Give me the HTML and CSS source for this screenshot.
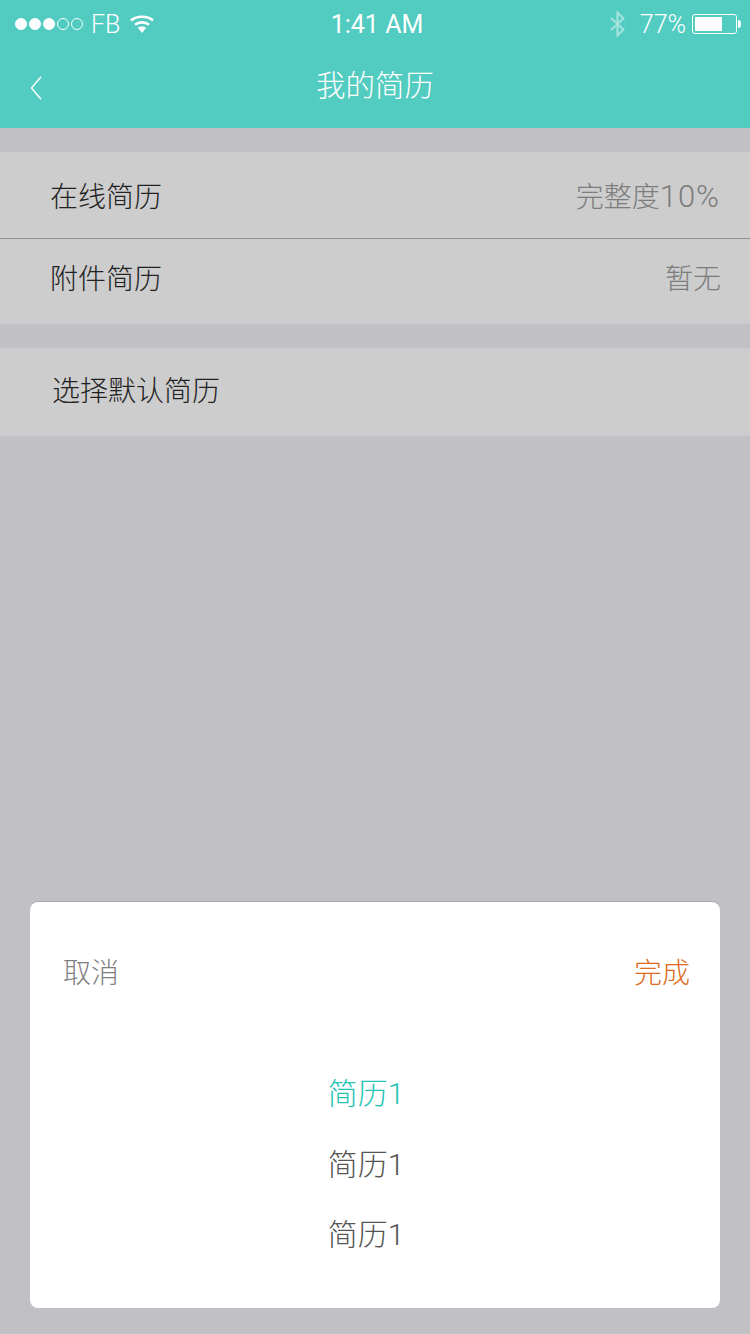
FILE: index.html
```html
<!DOCTYPE html>
<html lang="zh-CN">
<head>
  <meta charset="UTF-8">
  <title>我的简历</title>
  <link rel="stylesheet" href="styles.css">
</head>
<body>
  <header class="top">
    <div class="status">
      <div class="status-left">
        <span class="signal">
          <i class="dot on"></i><i class="dot on"></i><i class="dot on"></i><i class="dot"></i><i class="dot"></i>
        </span>
        <span class="carrier">FB</span>
        <svg class="wifi" width="24" height="18" viewBox="0 0 24 18">
          <path d="M1 5.5C6.5 .5 17.5 .5 23 5.5" fill="none" stroke="#fff" stroke-width="2.6"/>
          <path d="M5 9.8C8.8 6.5 15.2 6.5 19 9.8" fill="none" stroke="#fff" stroke-width="2.6"/>
          <path d="M7.8 12.8C10.2 11 13.8 11 16.2 12.8L12 18Z" fill="#fff"/>
        </svg>
      </div>
      <div class="clock">1:41 AM</div>
      <div class="status-right">
        <svg class="bt" width="15" height="26" viewBox="0 0 15 26">
          <path d="M1 7L13.5 18.5L7.5 24.5V1.5L13.5 7.5L1 19" fill="none" stroke="#a6e3dd" stroke-width="2"/>
        </svg>
        <span class="percent">77%</span>
        <span class="battery"><span class="battery-level"></span></span>
        <span class="battery-tip"></span>
      </div>
    </div>
    <div class="nav">
      <svg class="back" width="12" height="24" viewBox="0 0 12 24">
        <path d="M11 .8L1.5 12L11 23.2" fill="none" stroke="#fff" stroke-width="1.4"/>
      </svg>
      <h1 class="title">我的简历</h1>
    </div>
  </header>

  <main class="content">
    <section class="group">
      <div class="row row-first">
        <span class="row-label">在线简历</span>
        <span class="row-value">完整度<span class="num">10%</span></span>
      </div>
      <div class="row row-second">
        <span class="row-label">附件简历</span>
        <span class="row-value">暂无</span>
      </div>
    </section>
    <section class="group">
      <div class="row row-single">
        <span class="row-label">选择默认简历</span>
      </div>
    </section>

    <div class="dialog">
      <div class="dialog-head">
        <span class="cancel">取消</span>
        <span class="done">完成</span>
      </div>
      <ul class="options">
        <li class="option active">简历1</li>
        <li class="option">简历1</li>
        <li class="option">简历1</li>
      </ul>
    </div>
  </main>
</body>
</html>
```

FILE: styles.css
```css
* {
  box-sizing: border-box;
}
html, body {
  height: 100%;
}
body {
  margin: 0;
  display: flex;
  flex-direction: column;
  height: 1334px;
  overflow: hidden;
  background-color: #c1c0c5;
  font-family: "Roboto", "Noto Sans CJK SC", sans-serif;
  font-weight: 300;
}

/* top bar */
.top {
  height: 128px;
  background-color: #52cbc0;
  color: #fff;
}
.status {
  height: 48px;
  display: grid;
  grid-template-columns: 1fr auto 1fr;
  align-items: center;
  padding: 0 9px 0 15px;
  font-size: 25px;
}
.status-left, .status-right {
  display: flex;
  align-items: center;
}
.status-right {
  justify-content: flex-end;
}
.signal {
  display: flex;
  gap: 2px;
}
.dot {
  width: 12px;
  height: 12px;
  border: 1px solid #fff;
  border-radius: 50%;
}
.dot.on {
  background-color: #fff;
}
.carrier {
  margin-left: 8px;
}
.wifi {
  margin-left: 10px;
}
.clock {
  padding-right: 2px;
  font-weight: 400;
}
.bt {
  margin-right: 15px;
}
.battery {
  width: 45px;
  height: 20px;
  margin-left: 6px;
  padding: 2px;
  border: 1px solid #fff;
  border-radius: 3px;
}
.battery-level {
  display: block;
  width: 27px;
  height: 100%;
  background-color: #fff;
}
.battery-tip {
  width: 3px;
  height: 8px;
  margin-left: 1px;
  background-color: #fff;
  border-radius: 0 3px 3px 0;
}
.nav {
  height: 80px;
  position: relative;
  display: flex;
  align-items: center;
  justify-content: center;
  padding-bottom: 11px;
}
.back {
  position: absolute;
  left: 30px;
  top: 28px;
}
.title {
  margin: 0;
  font-size: 29.5px;
  font-weight: 300;
}

/* rows */
.content {
  flex: 1;
  display: flex;
  flex-direction: column;
  padding-top: 24px;
}
.group {
  margin-bottom: 24px;
  background-color: #cdcdcd;
}
.row {
  display: flex;
  justify-content: space-between;
  align-items: center;
  padding: 0 30px 0 50px;
  font-size: 28px;
  color: #222;
}
.row-first {
  height: 87px;
  border-bottom: 1px solid #8e8e8e;
}
.row-second {
  height: 85px;
  padding-right: 29px;
  padding-bottom: 9px;
}
.row-single {
  height: 88px;
  padding-left: 52px;
  padding-bottom: 6px;
}
.row-value {
  color: #7c7c7c;
}
.num {
  font-size: 31px;
  letter-spacing: 1px;
}

/* picker */
.dialog {
  margin: auto 30px 26px;
  height: 406px;
  background-color: #fff;
  border-radius: 8px;
  padding: 0 30px 0 33px;
  box-shadow: 0 -1px 0 #aaa;
}
.dialog-head {
  display: flex;
  justify-content: space-between;
  align-items: center;
  height: 138px;
  font-size: 28px;
  color: #7f7f7f;
}
.done {
  color: #e06a20;
}
.options {
  list-style: none;
  margin: 0;
  padding: 19px 0 0;
  font-size: 30px;
  color: #555;
  text-align: center;
}
.option {
  height: 70.5px;
  line-height: 70px;
  padding-right: 21px;
}
.option.active {
  color: #25c3b6;
}
```
